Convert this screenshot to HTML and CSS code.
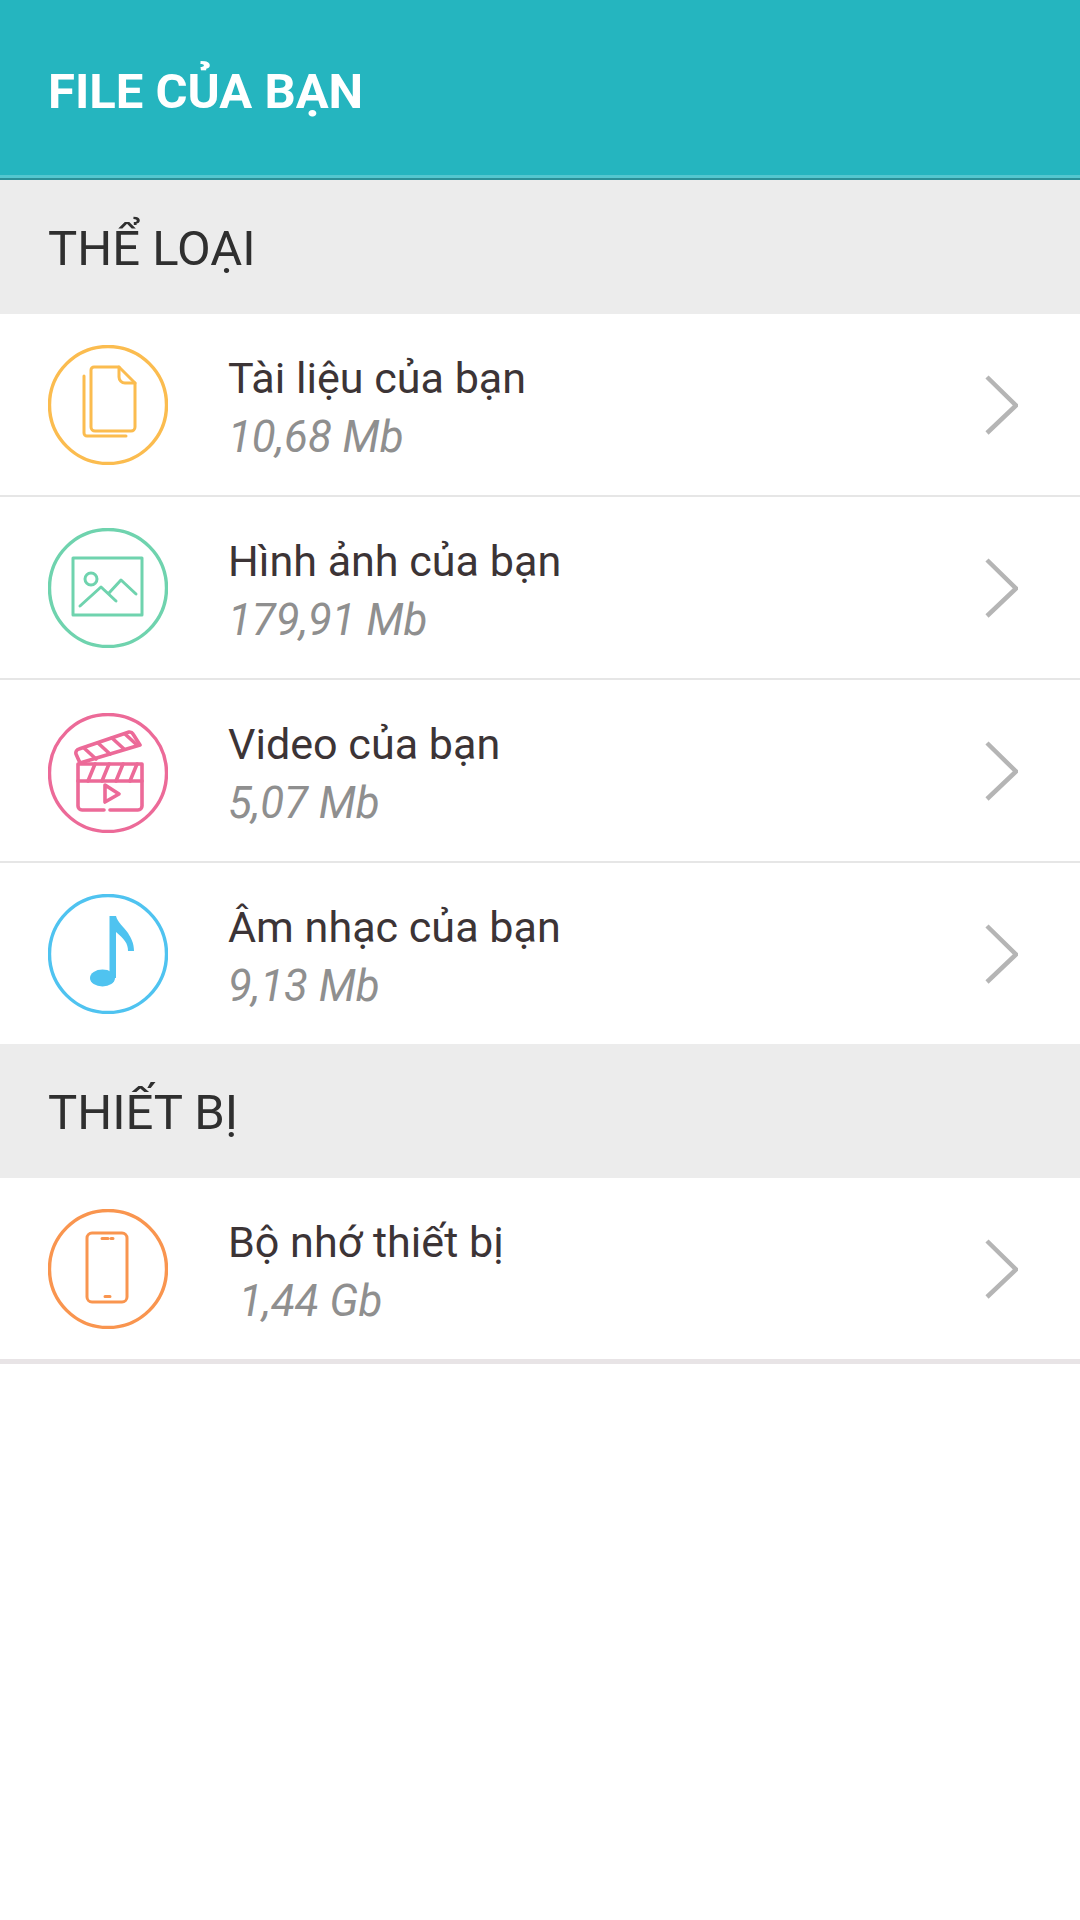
FILE: index.html
```html
<!DOCTYPE html>
<html lang="vi">
<head>
  <meta charset="UTF-8">
  <meta name="viewport" content="width=device-width, initial-scale=1.0">
  <title>File của bạn</title>
  <link rel="stylesheet" href="styles.css">
</head>
<body>
  <header class="app-bar">FILE CỦA BẠN</header>

  <div class="section-title">THỂ LOẠI</div>
  <div class="file-list">
    <div class="file-row">
      <svg class="row-icon icon-docs" viewBox="0 0 120 120">
        <circle cx="60" cy="60" r="58.5"/>
        <path d="M46 22h25l16 16v44a4 4 0 0 1-4 4H47a4 4 0 0 1-4-4V25a3 3 0 0 1 3-3z"/>
        <path d="M71 22v10a6 6 0 0 0 6 6h10"/>
        <path d="M36 31v57a3 3 0 0 0 3 3h39"/>
      </svg>
      <div class="row-text">
        <div class="row-name">Tài liệu của bạn</div>
        <div class="row-size">10,68 Mb</div>
      </div>
      <svg class="row-arrow" viewBox="0 0 34 60"><path d="M3 2l29 28.500L3 58"/></svg>
    </div>

    <div class="file-row">
      <svg class="row-icon icon-image" viewBox="0 0 120 120">
        <circle cx="60" cy="60" r="58.5"/>
        <rect x="25" y="30" width="69" height="57"/>
        <circle cx="43" cy="51" r="6"/>
        <path d="M32 78l21-19 15 14"/>
        <path d="M61 65l12-13 15 14"/>
      </svg>
      <div class="row-text">
        <div class="row-name">Hình ảnh của bạn</div>
        <div class="row-size">179,91 Mb</div>
      </div>
      <svg class="row-arrow" viewBox="0 0 34 60"><path d="M3 2l29 28.500L3 58"/></svg>
    </div>

    <div class="file-row">
      <svg class="row-icon row-icon-low icon-video" viewBox="0 0 120 120">
        <circle cx="60" cy="60" r="58.5"/>
        <path d="M56 97H34a4 4 0 0 1-4-4V51h64v42a4 4 0 0 1-4 4H62"/>
        <path d="M30 68h64"/>
        <path d="M40 68l7-17M54 68l7-17M68 68l7-17M82 68l7-17"/>
        <path d="M57 72l14 9-14 8z"/>
        <path d="M32 50l-4-9a4 4 0 0 1 3-5l50-17a4 4 0 0 1 4 2l7 11z"/>
        <path d="M36 35l12 11M50 30l12 11M64 25l12 11M77 21l12 11"/>
      </svg>
      <div class="row-text">
        <div class="row-name">Video của bạn</div>
        <div class="row-size">5,07 Mb</div>
      </div>
      <svg class="row-arrow" viewBox="0 0 34 60"><path d="M3 2l29 28.500L3 58"/></svg>
    </div>

    <div class="file-row">
      <svg class="row-icon icon-music" viewBox="0 0 120 120">
        <circle cx="60" cy="60" r="58.5"/>
        <path class="note-shape" d="M61.500 22H68c1.500 6 7 10 12 17 3 5 6 10 6 18h-6c0-8-4-12-12-19v46h-6.500z"/>
        <ellipse class="note-shape" cx="54.500" cy="84" rx="12.500" ry="8.500"/>
      </svg>
      <div class="row-text">
        <div class="row-name">Âm nhạc của bạn</div>
        <div class="row-size">9,13 Mb</div>
      </div>
      <svg class="row-arrow" viewBox="0 0 34 60"><path d="M3 2l29 28.500L3 58"/></svg>
    </div>
  </div>

  <div class="section-title">THIẾT BỊ</div>
  <div class="file-list file-list-end">
    <div class="file-row">
      <svg class="row-icon icon-phone" viewBox="0 0 120 120">
        <circle cx="60" cy="60" r="58.5"/>
        <rect x="39" y="24" width="40" height="69" rx="5"/>
        <path d="M54 29.500h6M63 29.500h2M57 87.500h5"/>
      </svg>
      <div class="row-text">
        <div class="row-name">Bộ nhớ thiết bị</div>
        <div class="row-size">&nbsp;1,44 Gb</div>
      </div>
      <svg class="row-arrow" viewBox="0 0 34 60"><path d="M3 2l29 28.500L3 58"/></svg>
    </div>
  </div>
</body>
</html>
```

FILE: styles.css
```css
* {
  box-sizing: border-box;
  margin: 0;
  padding: 0;
}

body {
  font-family: Roboto, "Liberation Sans", sans-serif;
  background-color: #fff;
  min-height: 100vh;
}

.app-bar {
  height: 180px;
  padding: 4px 48px 0;
  display: flex;
  align-items: center;
  background-color: #25b5bf;
  border-bottom: 2px solid #2b9097;
  box-shadow: inset 0 -3px 0 #54c7cf;
  color: #fff;
  font-size: 49px;
  font-weight: 700;
}

.section-title {
  height: 134px;
  padding: 2px 48px 0;
  display: flex;
  align-items: center;
  background-color: #ececec;
  color: #2f2f2f;
  font-size: 49px;
}

.file-row {
  height: 183px;
  padding: 0 62px 0 48px;
  display: flex;
  align-items: center;
  border-bottom: 2px solid #e6e6e6;
}

.file-row:last-child {
  height: 181px;
  border-bottom: none;
}

.file-list-end {
  border-bottom: 5px solid #e8e4e6;
}

.row-icon {
  width: 120px;
  height: 120px;
  flex-shrink: 0;
  fill: none;
  stroke-width: 3;
  stroke-linecap: round;
  stroke-linejoin: round;
}

.row-icon circle:first-child {
  stroke-width: 3.4;
}

.row-icon-low {
  margin-top: 5px;
}

.icon-docs { stroke: #fbbc4f; }
.icon-image { stroke: #6fd3ae; }
.icon-video { stroke: #ec6a98; stroke-width: 3.6; }
.icon-music { stroke: #4fc3f0; }
.icon-phone { stroke: #f9954f; }

.note-shape {
  fill: #4fc3f0;
  stroke: none;
}

.row-text {
  flex: 1;
  margin-left: 60px;
  padding-top: 6px;
}

.row-name {
  color: #3c3436;
  font-size: 43.1px;
  line-height: 58px;
}

.row-size {
  color: #8f8f8f;
  font-size: 43.8px;
  font-style: italic;
  line-height: 58px;
}

.row-arrow {
  width: 34px;
  height: 60px;
  flex-shrink: 0;
  fill: none;
  stroke: #b5b5b5;
  stroke-width: 4.5;
}
```
